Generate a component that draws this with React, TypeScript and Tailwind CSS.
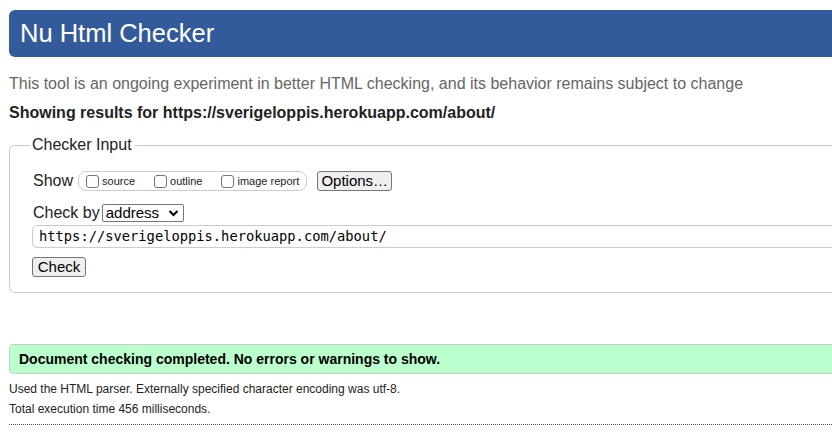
import React from "react";

function Box({ label }: { label: string }) {
  return (
    <span className="inline-flex items-center">
      <span className="inline-block w-[13px] h-[13px] rounded-[3px] border border-[#767676] bg-white" />
      <span className="ml-[3px] text-[11px] text-[#222]">{label}</span>
    </span>
  );
}

function Btn({ children, className = "" }: { children: React.ReactNode; className?: string }) {
  return (
    <span
      className={`inline-flex items-center justify-center h-[20px] rounded-[3px] border border-[#767676] bg-[#efefef] text-[15px] text-black ${className}`}
    >
      {children}
    </span>
  );
}

export default function App() {
  return (
    <div className="w-full h-[441px] overflow-hidden bg-white font-['Liberation_Sans',Arial,sans-serif] text-[#222]">
      <div className="w-[900px] pl-[9px] pt-[10px]">
        <header className="h-[47px] rounded-[6px] bg-[#335b9b] flex items-center pl-[11px]">
          <h1 className="text-[25.5px] leading-none text-white">Nu Html Checker</h1>
        </header>

        <p className="mt-[18px] text-[16px] leading-[18px] text-[#666]">
          This tool is an ongoing experiment in better HTML checking, and its behavior remains subject to change
        </p>
        <p className="mt-[11px] text-[16px] leading-[18px] font-bold text-[#222]">
          Showing results for https://sverigeloppis.herokuapp.com/about/
        </p>

        <fieldset className="mt-[14px] border border-[#ccc] rounded-[6px] pb-[15px]">
          <legend className="ml-[20px] px-[2px] text-[16px] leading-[18px]">Checker Input</legend>

          <div className="pl-[23px]">
            <div className="mt-[17px] flex items-center h-[20px]">
              <span className="text-[16px] leading-[18px]">Show</span>
              <span className="ml-[5px] inline-flex items-center h-[20px] rounded-[8px] border border-[#ccc] pl-[7px] pr-[7px] gap-[19px]">
                <Box label="source" />
                <Box label="outline" />
                <Box label="image report" />
              </span>
              <Btn className="ml-[10px] w-[75px]">Options…</Btn>
            </div>

            <div className="mt-[13px] flex items-center h-[18px]">
              <span className="text-[16px] leading-[18px]">Check by</span>
              <span className="ml-[2px] inline-flex items-center justify-between w-[82px] h-[18px] border border-[#767676] rounded-[2px] pl-[3px] pr-[4px] text-[15px] text-black">
                address
                <svg width="11" height="8" viewBox="0 0 11 8">
                  <path d="M1.5 2 L5.5 6 L9.5 2" fill="none" stroke="#000" strokeWidth="2" />
                </svg>
              </span>
            </div>

            <div className="mt-[3px] -ml-[1px] h-[23px] border border-[#ccc] rounded-[5px] flex items-center pl-[6px] font-['DejaVu_Sans_Mono',monospace] text-[13.75px] text-black">
              https://sverigeloppis.herokuapp.com/about/
            </div>

            <div className="mt-[9px] -ml-[1px] flex">
              <Btn className="w-[54px] h-[20px]">Check</Btn>
            </div>
          </div>
        </fieldset>

        <div className="mt-[51px] h-[30px] rounded-l-[4px] border border-[#ccc] bg-[#bfc] flex items-center pl-[9px]">
          <span className="text-[14px] font-bold text-black">
            Document checking completed. No errors or warnings to show.
          </span>
        </div>

        <p className="mt-[8px] text-[12px] leading-[14px] text-[#222]">
          Used the HTML parser. Externally specified character encoding was utf-8.
        </p>
        <p className="mt-[6px] text-[12px] leading-[14px] text-[#222]">Total execution time 456 milliseconds.</p>
        <div className="mt-[8px] border-t border-dotted border-[#555]" />
      </div>
    </div>
  );
}
